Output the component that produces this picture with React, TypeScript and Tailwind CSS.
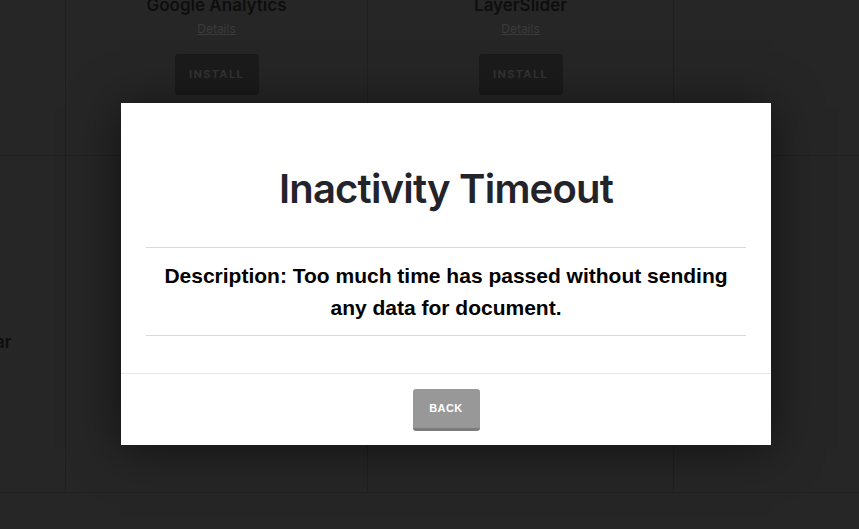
import React from "react";

type Plugin = { name: string; titleOnly?: boolean };

const rows: (Plugin | null)[][] = [
  [null, { name: "Google Analytics" }, { name: "LayerSlider" }, null],
  [{ name: "Simple Booking Calendar", titleOnly: true }, { name: "Contact Form 7" }, { name: "WooCommerce" }, null],
];

const colWidths = ["w-[314px]", "w-[302px]", "w-[306px]", "flex-1"];

function PluginCard({ plugin, width, last }: { plugin: Plugin | null; width: string; last: boolean }) {
  return (
    <div
      className={`${width} shrink-0 h-[337px] border-b border-[#202020] ${
        last ? "" : "border-r"
      } flex flex-col items-center pt-[176px]`}
    >
      {plugin && (
        <>
          <h3 className="text-[17px] leading-5 font-semibold text-[#0e0e0e] whitespace-nowrap">
            {plugin.name}
          </h3>
          {!plugin.titleOnly && (
            <>
              <a className="mt-[6px] text-[12px] leading-4 text-[#3a3a3a] underline">Details</a>
              <button className="mt-[17px] w-[84px] h-[41px] rounded-[4px] bg-[#1b1b1b] text-[11px] font-bold tracking-[0.12em] text-[#333333]">
                INSTALL
              </button>
            </>
          )}
        </>
      )}
    </div>
  );
}

export default function App() {
  return (
    <div
      className="relative w-full h-[529px] overflow-hidden bg-[#262626]"
      style={{ fontFamily: "Inter, 'Liberation Sans', sans-serif" }}
    >
      {/* dimmed plugin grid */}
      <div className="ml-[-248px] mt-[-181px] w-[1107px] flex flex-col">
        {rows.map((row, i) => (
          <div key={i} className="flex">
            {row.map((p, j) => (
              <PluginCard key={j} plugin={p} width={colWidths[j]} last={j === row.length - 1} />
            ))}
          </div>
        ))}
      </div>

      {/* modal */}
      <div className="absolute left-[121px] top-[103px] w-[650px] h-[342px] bg-white shadow-[0_4px_45px_rgba(0,0,0,0.55)] flex flex-col">
        <div className="px-[25px]">
          <h1 className="pt-[62px] text-center text-[40px] leading-[48px] font-semibold tracking-[-0.02em] text-[#23232a]">
            Inactivity Timeout
          </h1>
          <div className="mt-[34px] border-t border-[#dadada]" />
          <p
            className="pt-[12px] pb-[11px] text-center text-[21px] leading-[32px] font-bold text-black"
            style={{ fontFamily: "'Liberation Sans', Arial, sans-serif" }}
          >
            Description: Too much time has passed without sending
            <br />
            any data for document.
          </p>
          <div className="border-t border-[#dadada]" />
        </div>
        <div className="mt-[37px] border-t border-[#e6e6e6] flex-1 flex items-start justify-center pt-[15px]">
          <button
            className="w-[67px] h-[42px] rounded-[3px] bg-[#989898] border-b-[3px] border-[#7c7c7c] text-white text-[11px] font-bold tracking-[0.04em]"
            style={{ fontFamily: "'Liberation Sans', Arial, sans-serif" }}
          >
            BACK
          </button>
        </div>
      </div>
    </div>
  );
}
